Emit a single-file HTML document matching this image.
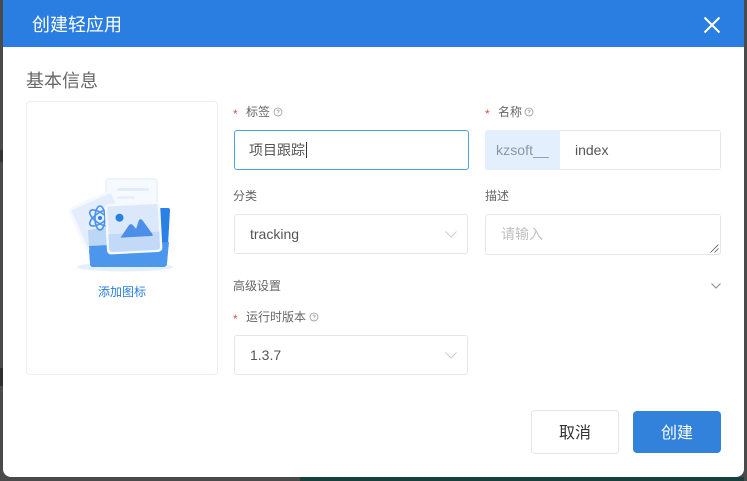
<!DOCTYPE html>
<html lang="zh">
<head>
<meta charset="utf-8">
<style>
html,body{margin:0;padding:0;width:747px;height:481px;overflow:hidden;background:#4a4a4a;font-family:"Liberation Sans","Noto Sans CJK SC",sans-serif;}
.a{position:absolute;white-space:nowrap;}
.box{position:absolute;box-sizing:border-box;background:#fff;border:1px solid #e6e6e6;border-radius:3px;}
.lab{font-size:12px;color:#666;line-height:16px;}
.star{color:#d9534f;font-size:12px;line-height:16px;}
.val{font-size:14px;color:#555;line-height:20px;}
svg{position:absolute;overflow:visible;}
</style>
</head>
<body>
<div class="a" style="left:300px;top:477px;width:447px;height:4px;background:#17403c"></div>
<div class="a" style="left:744px;top:0;width:3px;height:481px;background:#4a4a4a"></div>
<div class="a" style="left:0;top:150px;width:3px;height:12px;background:#333"></div>
<div class="a" style="left:0;top:368px;width:3px;height:18px;background:#2f2f2f"></div>

<div class="a" style="left:3px;top:0;width:741px;height:477px;background:#fff;border-radius:0 0 8px 8px;overflow:hidden">
  <div style="height:47px;background:#2a7de1"></div>
</div>
<div class="a" style="left:32px;top:13px;font-size:18px;line-height:24px;color:#fff">创建轻应用</div>
<svg style="left:703px;top:16px" width="18" height="18" viewBox="0 0 18 18"><path d="M1.5 1.5L16.5 16.5M16.5 1.5L1.5 16.5" stroke="#fff" stroke-width="2" fill="none"/></svg>

<div class="a" style="left:26px;top:69px;font-size:18px;line-height:24px;color:#666">基本信息</div>

<div class="box" style="left:26px;top:101px;width:192px;height:274px;border-color:#eee;border-radius:4px"></div>

<svg style="left:70px;top:175px;filter:blur(.35px)" width="110" height="100" viewBox="0 0 110 100">
  <ellipse cx="55" cy="92" rx="48" ry="4.5" fill="#e3effc"/>
  <rect x="36" y="4" width="51" height="46" rx="3" fill="#f6f9fe" stroke="#edf3fc" stroke-width="2"/>
  <rect x="47" y="13" width="32" height="3" rx="1.5" fill="#e3ecfa"/>
  <rect x="47" y="21" width="18" height="3" rx="1.5" fill="#e8f0fb"/>
  <path d="M85 33L98 33Q100 33 100 35L97 88Q97 92 93 92L23 92Q20 92 20 88L18 60L85 60Z" fill="#2a80e4"/>
  <g transform="rotate(-24 28 45)">
    <rect x="6" y="24" width="46" height="44" rx="3" fill="#e3edfb" stroke="#f5f8fe" stroke-width="3"/>
  </g>
  <path d="M18 55L40 52L40 72L19 72Z" fill="#bcd6f6"/>
  <path d="M19 71L99 67L97 88Q97 92 93 92L23 92Q20 92 20 88Z" fill="#4c96ec"/>
  <g fill="none" stroke="#4a93ea" stroke-width="1.6">
    <ellipse cx="30" cy="43" rx="12" ry="5" transform="rotate(90 30 43)"/>
    <ellipse cx="30" cy="43" rx="12" ry="5" transform="rotate(35 30 43)"/>
    <ellipse cx="30" cy="43" rx="12" ry="5" transform="rotate(-35 30 43)"/>
  </g>
  <circle cx="30" cy="43" r="2" fill="#2a80e4"/>
  <g transform="rotate(-3 63 52)">
    <rect x="37" y="29" width="53" height="48" rx="3" fill="#dbe8fa" stroke="#f5f8fe" stroke-width="2.5"/>
    <path d="M38 58L89 58L89 72Q89 76 85 76L42 76Q38 76 38 72Z" fill="#c2daf7"/>
    <circle cx="50" cy="42" r="4" fill="#2a7de1"/>
    <path d="M50 62L59 50Q61 48 63 50L66 54L69 46Q71 43 73 46L82 60Q83 62 81 62Z" fill="#4c8fe8"/>
  </g>
</svg>
<div class="a" style="left:98px;top:284px;font-size:12px;line-height:16px;color:#2a7de1">添加图标</div>

<!-- 标签 -->
<div class="a star" style="left:233px;top:106px">*</div>
<div class="a lab" style="left:246px;top:104px">标签</div>
<svg style="left:273px;top:107px" width="10" height="10" viewBox="0 0 10 10"><circle cx="5" cy="5" r="4" fill="none" stroke="#999" stroke-width=".8"/><path d="M3.8 4Q4 3 5 3Q6.2 3 6.2 4Q6.2 4.7 5 5.2L5 6M5 6.8L5 7.4" fill="none" stroke="#999" stroke-width=".7"/></svg>
<div class="box" style="left:234px;top:130px;width:235px;height:40px;border-color:#4aa3dc"></div>
<div class="a val" style="left:249px;top:140px">项目跟踪</div>
<div class="a" style="left:306px;top:142px;width:1px;height:16px;background:#333"></div>

<!-- 名称 -->
<div class="a star" style="left:485px;top:106px">*</div>
<div class="a lab" style="left:498px;top:104px">名称</div>
<svg style="left:524px;top:107px" width="10" height="10" viewBox="0 0 10 10"><circle cx="5" cy="5" r="4" fill="none" stroke="#999" stroke-width=".8"/><path d="M3.8 4Q4 3 5 3Q6.2 3 6.2 4Q6.2 4.7 5 5.2L5 6M5 6.8L5 7.4" fill="none" stroke="#999" stroke-width=".7"/></svg>
<div class="box" style="left:485px;top:130px;width:236px;height:40px"></div>
<div class="a" style="left:485px;top:130px;width:75px;height:40px;background:#e3effd;border-radius:3px 0 0 3px"></div>
<div class="a val" style="left:496px;top:140px;color:#8a97a8;letter-spacing:.1px">kzsoft__</div>
<div class="a val" style="left:575px;top:140px">index</div>

<!-- 分类 -->
<div class="a lab" style="left:233px;top:188px">分类</div>
<div class="box" style="left:234px;top:214px;width:234px;height:40px"></div>
<div class="a val" style="left:250px;top:224px">tracking</div>
<svg style="left:445px;top:231px" width="12" height="7" viewBox="0 0 12 7"><path d="M.5 .5L6 6L11.5 .5" fill="none" stroke="#ccc"/></svg>

<!-- 描述 -->
<div class="a lab" style="left:485px;top:188px">描述</div>
<div class="box" style="left:485px;top:214px;width:236px;height:41px"></div>
<div class="a" style="left:501px;top:224px;font-size:14px;line-height:20px;color:#bfbfbf">请输入</div>
<svg style="left:710px;top:244px" width="9" height="9" viewBox="0 0 9 9"><path d="M.5 8.5L8.5 .5M4.5 8.5L8.5 4.5" stroke="#555" stroke-width=".8" fill="none"/></svg>

<!-- 高级设置 -->
<div class="a lab" style="left:233px;top:278px">高级设置</div>
<svg style="left:711px;top:283px" width="10" height="6" viewBox="0 0 10 6"><path d="M.5 .5L5 5L9.5 .5" fill="none" stroke="#888"/></svg>

<!-- 运行时版本 -->
<div class="a star" style="left:233px;top:311px">*</div>
<div class="a lab" style="left:246px;top:309px">运行时版本</div>
<svg style="left:309px;top:312px" width="10" height="10" viewBox="0 0 10 10"><circle cx="5" cy="5" r="4" fill="none" stroke="#999" stroke-width=".8"/><path d="M3.8 4Q4 3 5 3Q6.2 3 6.2 4Q6.2 4.7 5 5.2L5 6M5 6.8L5 7.4" fill="none" stroke="#999" stroke-width=".7"/></svg>
<div class="box" style="left:234px;top:335px;width:234px;height:40px"></div>
<div class="a val" style="left:250px;top:345px">1.3.7</div>
<svg style="left:445px;top:352px" width="12" height="7" viewBox="0 0 12 7"><path d="M.5 .5L6 6L11.5 .5" fill="none" stroke="#ccc"/></svg>

<!-- 按钮 -->
<div class="box" style="left:531px;top:410px;width:88px;height:44px;border-radius:4px;text-align:center;font-size:16px;line-height:45px;color:#333">取消</div>
<div class="a" style="left:633px;top:411px;width:88px;height:42px;border-radius:4px;background:#3282dc;text-align:center;font-size:16px;line-height:45px;color:#fff">创建</div>
</body>
</html>
